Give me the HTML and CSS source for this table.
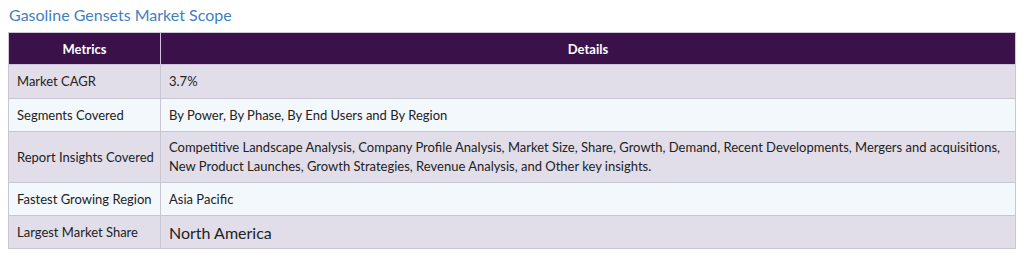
FILE: index.html
```html
<!DOCTYPE html>
<html>
<head>
<meta charset="utf-8">
<link rel="stylesheet" href="styles.css">
</head>
<body>
<div class="page">
  <h2 class="title">Gasoline Gensets Market Scope</h2>
  <table class="scope">
    <colgroup><col class="col1"><col class="col2"></colgroup>
    <thead>
      <tr><th>Metrics</th><th>Details</th></tr>
    </thead>
    <tbody>
      <tr class="odd first"><td class="label">Market CAGR</td><td>3.7%</td></tr>
      <tr class="even"><td class="label">Segments Covered</td><td>By Power, By Phase, By End Users and By Region</td></tr>
      <tr class="odd tall"><td class="label">Report Insights Covered</td><td>Competitive Landscape Analysis, Company Profile Analysis, Market Size, Share, Growth, Demand, Recent Developments, Mergers and acquisitions, New Product Launches, Growth Strategies, Revenue Analysis, and Other key insights.</td></tr>
      <tr class="even"><td class="label">Fastest Growing Region</td><td>Asia Pacific</td></tr>
      <tr class="odd"><td class="label">Largest Market Share</td><td class="big">North America</td></tr>
    </tbody>
  </table>
</div>
</body>
</html>
```
FILE: styles.css
```css
html, body {
  margin: 0;
  padding: 0;
  background: #ffffff;
}
.page {
  padding: 5px 8px 0 8px;
  font-family: Lato, "Open Sans", sans-serif;
}
.title {
  margin: 0 0 7px 1px;
  font-size: 16px;
  font-weight: 400;
  color: #3f7fc0;
  line-height: 20px;
}
.scope {
  width: 1008px;
  border-collapse: collapse;
  table-layout: fixed;
  font-size: 13px;
  color: #222;
}
.col1 {
  width: 152px;
}
.scope th {
  background: #3a1148;
  color: #fff;
  font-weight: 700;
  height: 31px;
  padding: 0 8px;
  text-align: center;
  border: 1px solid #d0c4dc;
  font-size: 13px;
}
.scope td {
  height: 32px;
  padding: 0 8px;
  border: 1px solid #c9c6d4;
  vertical-align: middle;
  line-height: 19px;
}
.scope td.label {
  white-space: nowrap;
  padding-right: 2px;
}
.scope tr.odd td {
  background: #e1deea;
}
.scope tr.even td {
  background: #f3f8fc;
}
.scope tr.first td {
  height: 33px;
}
.scope tr.tall td {
  height: 50px;
}
.scope td.big {
  font-size: 16px;
}
```
